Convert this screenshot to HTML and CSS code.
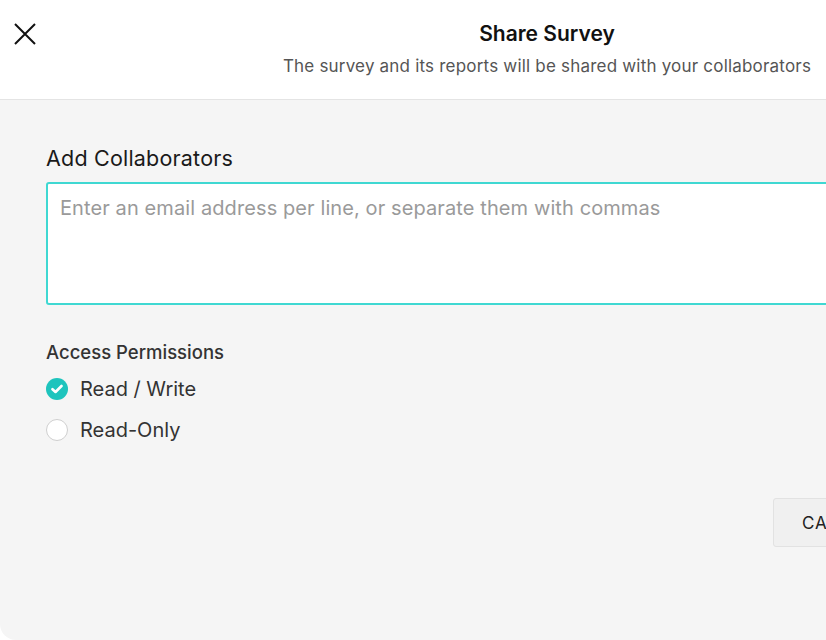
FILE: index.html
```html
<!DOCTYPE html>
<html lang="en">
  <head>
    <meta charset="UTF-8" />
    <meta name="viewport" content="width=device-width, initial-scale=1.0" />
    <title>Share Survey</title>
    <link rel="stylesheet" href="styles.css">
  </head>
  <body>
    <div class="modal">
      <div class="modal-header">
        <button class="close-btn" aria-label="Close">
          <svg width="22" height="22" viewBox="0 0 22 22">
            <path d="M1 1 L21 21 M21 1 L1 21" stroke="#111" stroke-width="2" fill="none" />
          </svg>
        </button>
        <div class="header-text">
          <h1 class="title">Share Survey</h1>
          <p class="subtitle">The survey and its reports will be shared with your collaborators</p>
        </div>
      </div>

      <div class="modal-body">
        <label class="field-label" for="emails">Add Collaborators</label>
        <textarea id="emails" class="email-input" placeholder="Enter an email address per line, or separate them with commas"></textarea>

        <div class="permissions">
          <div class="permissions-title">Access Permissions</div>
          <label class="option">
            <span class="radio checked">
              <svg width="12" height="10" viewBox="0 0 12 10">
                <path d="M1.5 5.2 L4.5 8 L10.5 2" stroke="#fff" stroke-width="2.6" fill="none" stroke-linecap="round" stroke-linejoin="round" />
              </svg>
            </span>
            Read / Write
          </label>
          <label class="option">
            <span class="radio"></span>
            Read-Only
          </label>
        </div>

        <div class="actions">
          <button class="btn btn-cancel">CANCEL</button>
          <button class="btn btn-share">SHARE</button>
        </div>
      </div>
    </div>
  </body>
</html>
```

FILE: styles.css
```css
html,
body {
  margin: 0;
  height: 100%;
  overflow: hidden;
  background: #ffffff;
}

body {
  font-family: Inter, "Noto Sans", sans-serif;
  color: #222;
}

.modal {
  width: 1094px;
  height: 640px;
  background: #f5f5f5;
  border-radius: 0 0 16px 16px;
  overflow: hidden;
  display: flex;
  flex-direction: column;
}

.modal-header {
  height: 100px;
  box-sizing: border-box;
  background: #fff;
  border-bottom: 1px solid #e4e4e4;
  display: flex;
  align-items: flex-start;
  padding: 23px 0 0 14px;
}

.close-btn {
  background: none;
  border: none;
  padding: 0;
  width: 22px;
  height: 22px;
  cursor: pointer;
  flex-shrink: 0;
}

.header-text {
  flex: 1;
  text-align: center;
  margin-right: 36px;
}

.title {
  margin: 0;
  font-size: 21px;
  font-weight: 600;
  line-height: 22px;
  color: #111;
}

.subtitle {
  margin: 10px 0 0;
  font-size: 17px;
  letter-spacing: 0.2px;
  line-height: 22px;
  color: #555;
}

.modal-body {
  padding: 44px 46px 0;
  display: flex;
  flex-direction: column;
}

.field-label {
  font-size: 21.5px;
  letter-spacing: 0.2px;
  line-height: 28px;
  color: #1a1a1a;
  margin-bottom: 10px;
}

.email-input {
  height: 123px;
  box-sizing: border-box;
  border: 2px solid #3fd8d2;
  border-radius: 3px;
  background: #fff;
  padding: 12px 12px;
  font-family: inherit;
  font-size: 20px;
  letter-spacing: 0.1px;
  line-height: 24px;
  resize: none;
  outline: none;
}

.email-input::placeholder {
  color: #9a9a9a;
}

.permissions {
  margin-top: 36px;
  display: flex;
  flex-direction: column;
}

.permissions-title {
  font-size: 18.5px;
  font-weight: 500;
  line-height: 22px;
  color: #333;
  margin-bottom: 5px;
}

.option {
  display: flex;
  align-items: center;
  gap: 12px;
  height: 41px;
  font-size: 20px;
  color: #333;
  cursor: pointer;
}

.radio {
  width: 22px;
  height: 22px;
  box-sizing: border-box;
  border-radius: 50%;
  border: 1.5px solid #cfcfcf;
  background: #fff;
  display: flex;
  align-items: center;
  justify-content: center;
}

.radio.checked {
  border: none;
  background: #1ec4bd;
}

.actions {
  margin-top: 48px;
  margin-left: 727px;
  display: flex;
  gap: 12px;
}

.btn {
  height: 49px;
  padding: 0 28px;
  font-family: inherit;
  font-size: 17px;
  letter-spacing: 0.8px;
  border-radius: 3px;
  cursor: pointer;
  flex-shrink: 0;
}

.btn-cancel {
  background: #f0f0f0;
  border: 1px solid #e2e2e2;
  color: #222;
}

.btn-share {
  background: #1ec4bd;
  border: 1px solid #1ec4bd;
  color: #fff;
}
```
